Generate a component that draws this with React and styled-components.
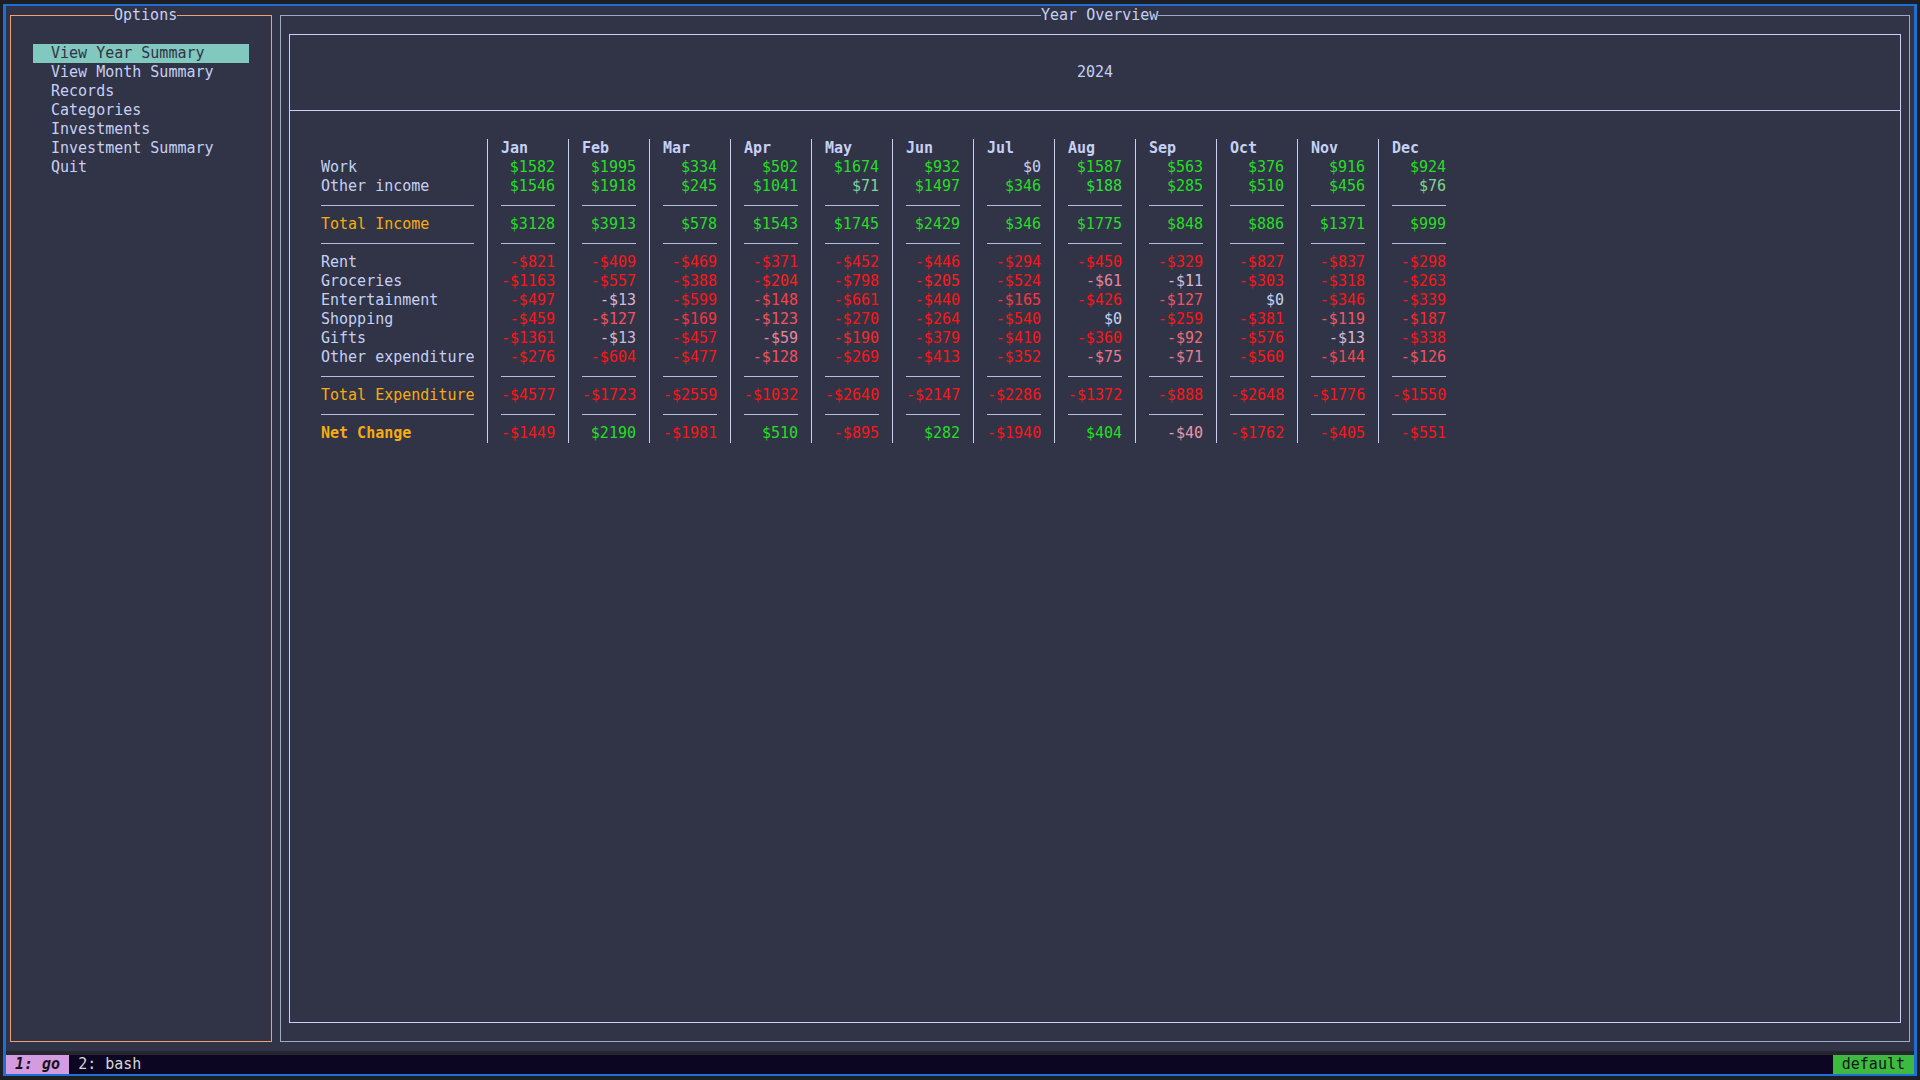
import React from 'react';
import styled, { createGlobalStyle } from 'styled-components';

const TEXT = [198, 208, 245];
const RED = [252, 22, 22];
const GREEN = [38, 222, 38];

const GlobalStyle = createGlobalStyle`
  html, body { margin: 0; padding: 0; background: #1e1f25; }
  body {
    font-family: "DejaVu Sans Mono", "Liberation Mono", monospace;
    font-size: 15px;
    line-height: 19px;
    color: #c6d0f5;
  }
  * { box-sizing: border-box; }
`;

const Screen = styled.div`
  width: 1920px;
  height: 1080px;
  padding: 4px 3px;
  background: #1e1f25;
`;

const Window = styled.div`
  height: 100%;
  border-style: solid;
  border-color: #1f6ed4;
  border-width: 2px 3px;
  background: #25262f;
  display: flex;
  flex-direction: column;
`;

const Workspace = styled.div`
  height: 1045px;
  flex: 0 0 auto;
  display: flex;
  background: #303446;
`;

const Strip = styled.div`
  height: 4px;
  flex: 0 0 auto;
`;

const Panel = styled.div`
  position: relative;
  margin: 9px 4px;
  padding: 9px 4px;
  border: 1px solid ${(p) => p.$color};
  display: flex;
  flex-direction: column;
  flex: ${(p) => (p.$grow ? '1 1 auto' : '0 0 auto')};
  width: ${(p) => (p.$width ? `${p.$width}px` : 'auto')};
  min-width: 0;
  min-height: 0;
`;

const Legend = styled.span`
  position: absolute;
  top: -10px;
  left: ${(p) => p.$left}px;
  height: 19px;
  background: #303446;
  color: #c6d0f5;
  white-space: pre;
`;

const Menu = styled.ul`
  list-style: none;
  margin: 19px 0 0 18px;
  padding: 0;
  width: 216px;
`;

const MenuItem = styled.li`
  height: 19px;
  padding-left: 18px;
  white-space: pre;
  background: ${(p) => (p.$active ? '#81c8be' : 'transparent')};
  color: ${(p) => (p.$active ? '#303446' : '#c6d0f5')};
`;

const YearHeader = styled.div`
  height: 57px;
  flex: 0 0 auto;
  display: flex;
  align-items: center;
  justify-content: center;
`;

const Rule = styled.div`
  margin: 9px -4px;
  border-top: 1px solid #c6d0f5;
  flex: 0 0 auto;
`;

const Table = styled.div`
  margin: 19px 0 0 27px;
  display: grid;
  grid-template-columns: 162px repeat(12, 81px);
  grid-auto-rows: 19px;
  align-self: flex-start;
`;

const LabelCell = styled.div`
  padding-right: 9px;
  white-space: pre;
  color: ${(p) => p.$color || '#c6d0f5'};
  font-weight: ${(p) => (p.$bold ? 'bold' : 'normal')};
`;

const MonthCell = styled.div`
  margin-left: 4px;
  border-left: 1px solid #c6d0f5;
  padding: 0 9px 0 13px;
  white-space: pre;
  text-align: ${(p) => (p.$head ? 'left' : 'right')};
  font-weight: ${(p) => (p.$head ? 'bold' : 'normal')};
  color: ${(p) => p.$color || '#c6d0f5'};
`;

const Dash = styled.div`
  height: 1px;
  margin-top: 9px;
  background: #b5bfe2;
`;

const StatusBar = styled.div`
  height: 19px;
  flex: 0 0 auto;
  display: flex;
  background: #0c0623;
  color: #d6d6dc;
`;

const Tab = styled.span`
  padding: 0 9px;
  white-space: pre;
  background: ${(p) => (p.$active ? '#d49be0' : 'transparent')};
  color: ${(p) => (p.$active ? '#15141c' : '#d6d6dc')};
  font-weight: ${(p) => (p.$active ? 'bold' : 'normal')};
  font-style: ${(p) => (p.$active ? 'italic' : 'normal')};
`;

const Session = styled.span`
  margin-left: auto;
  padding: 0 9px;
  background: #3dba3f;
  color: #14161a;
`;

const MONTHS = ['Jan', 'Feb', 'Mar', 'Apr', 'May', 'Jun', 'Jul', 'Aug', 'Sep', 'Oct', 'Nov', 'Dec'];

const ROWS = [
  { type: 'head' },
  { label: 'Work', values: [1582, 1995, 334, 502, 1674, 932, 0, 1587, 563, 376, 916, 924] },
  { label: 'Other income', values: [1546, 1918, 245, 1041, 71, 1497, 346, 188, 285, 510, 456, 76] },
  { type: 'line' },
  { label: 'Total Income', accent: true, values: [3128, 3913, 578, 1543, 1745, 2429, 346, 1775, 848, 886, 1371, 999] },
  { type: 'line' },
  { label: 'Rent', values: [-821, -409, -469, -371, -452, -446, -294, -450, -329, -827, -837, -298] },
  { label: 'Groceries', values: [-1163, -557, -388, -204, -798, -205, -524, -61, -11, -303, -318, -263] },
  { label: 'Entertainment', values: [-497, -13, -599, -148, -661, -440, -165, -426, -127, 0, -346, -339] },
  { label: 'Shopping', values: [-459, -127, -169, -123, -270, -264, -540, 0, -259, -381, -119, -187] },
  { label: 'Gifts', values: [-1361, -13, -457, -59, -190, -379, -410, -360, -92, -576, -13, -338] },
  { label: 'Other expenditure', values: [-276, -604, -477, -128, -269, -413, -352, -75, -71, -560, -144, -126] },
  { type: 'line' },
  { label: 'Total Expenditure', accent: true, values: [-4577, -1723, -2559, -1032, -2640, -2147, -2286, -1372, -888, -2648, -1776, -1550] },
  { type: 'line' },
  { label: 'Net Change', accent: true, bold: true, values: [-1449, 2190, -1981, 510, -895, 282, -1940, 404, -40, -1762, -405, -551] },
];

const MENU = ['View Year Summary', 'View Month Summary', 'Records', 'Categories', 'Investments', 'Investment Summary', 'Quit'];

function valueColor(v) {
  if (v === 0) return `rgb(${TEXT.join(',')})`;
  const t = Math.min(1, Math.pow(Math.abs(v) / 220, 0.7));
  const target = v < 0 ? RED : GREEN;
  const c = TEXT.map((a, i) => {
    const k = v < 0 && i === 0 ? Math.sqrt(t) : t;
    return Math.round(a + (target[i] - a) * k);
  });
  return `rgb(${c.join(',')})`;
}

function fmt(v) {
  return v < 0 ? `-$${Math.abs(v)}` : `$${v}`;
}

function TableRow({ row }) {
  if (row.type === 'head') {
    return (
      <>
        <LabelCell />
        {MONTHS.map((m) => (
          <MonthCell key={m} $head>{m}</MonthCell>
        ))}
      </>
    );
  }
  if (row.type === 'line') {
    return (
      <>
        <LabelCell><Dash /></LabelCell>
        {MONTHS.map((m) => (
          <MonthCell key={m}><Dash /></MonthCell>
        ))}
      </>
    );
  }
  return (
    <>
      <LabelCell $color={row.accent ? '#f8ab12' : undefined} $bold={row.bold}>{row.label}</LabelCell>
      {row.values.map((v, i) => (
        <MonthCell key={MONTHS[i]} $color={valueColor(v)}>{fmt(v)}</MonthCell>
      ))}
    </>
  );
}

export default function App() {
  return (
    <>
      <GlobalStyle />
      <Screen>
        <Window>
          <Workspace>
            <Panel $color="#ef9f76" $width={262}>
              <Legend $left={103}>Options</Legend>
              <Menu>
                {MENU.map((item, i) => (
                  <MenuItem key={item} $active={i === 0}>{item}</MenuItem>
                ))}
              </Menu>
            </Panel>
            <Panel $color="#a0a8c8" $grow>
              <Legend $left={760}>Year Overview</Legend>
              <Panel $color="#c6d0f5" $grow>
                <YearHeader>2024</YearHeader>
                <Rule />
                <Table>
                  {ROWS.map((row, i) => (
                    <TableRow key={i} row={row} />
                  ))}
                </Table>
              </Panel>
            </Panel>
          </Workspace>
          <Strip />
          <StatusBar>
            <Tab $active>1: go</Tab>
            <Tab>2: bash</Tab>
            <Session>default</Session>
          </StatusBar>
        </Window>
      </Screen>
    </>
  );
}
